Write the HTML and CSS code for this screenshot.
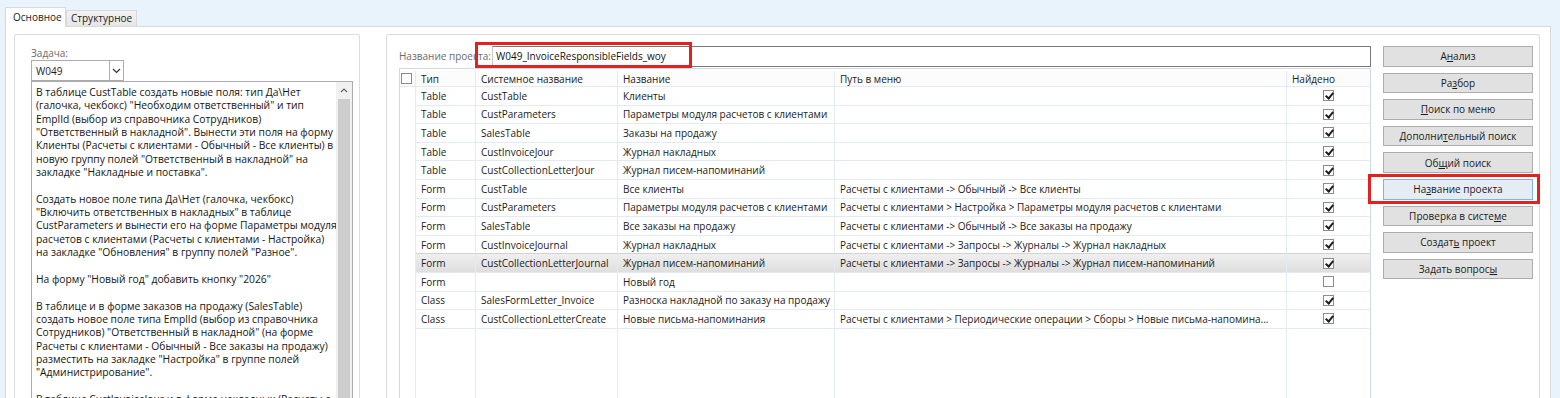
FILE: index.html
```html
<!DOCTYPE html>
<html lang="ru">
<head>
<meta charset="utf-8">
<title>Project</title>
<link rel="stylesheet" href="styles.css">
</head>
<body>
<div class="window">
  <div class="tabs">
    <div class="tab active">Основное</div>
    <div class="tab">Структурное</div>
  </div>
  <div class="page">
    <div class="group left-group">
      <div class="field-label">Задача:</div>
      <div class="combo">
        <span class="combo-text">W049</span>
        <span class="combo-btn"><svg width="9" height="6" viewBox="0 0 9 6"><path d="M1 1 L4.5 4.5 L8 1" fill="none" stroke="#333" stroke-width="1.2"/></svg></span>
      </div>
      <div class="memo">
        <div class="memo-text">
          <div>В таблице CustTable создать новые поля: тип Да\Нет</div>
          <div>(галочка, чекбокс) "Необходим ответственный" и тип</div>
          <div>EmplId (выбор из справочника Сотрудников)</div>
          <div>"Ответственный в накладной". Вынести эти поля на форму</div>
          <div>Клиенты (Расчеты с клиентами - Обычный - Все клиенты) в</div>
          <div>новую группу полей "Ответственный в накладной" на</div>
          <div>закладке "Накладные и поставка".</div>
          <div>&nbsp;</div>
          <div>Создать новое поле типа Да\Нет (галочка, чекбокс)</div>
          <div>"Включить ответственных в накладных" в таблице</div>
          <div>CustParameters и вынести его на форме Параметры модуля</div>
          <div>расчетов с клиентами (Расчеты с клиентами - Настройка)</div>
          <div>на закладке "Обновления" в группу полей "Разное".</div>
          <div>&nbsp;</div>
          <div>На форму "Новый год" добавить кнопку "2026"</div>
          <div>&nbsp;</div>
          <div>В таблице и в форме заказов на продажу (SalesTable)</div>
          <div>создать новое поле типа EmplId (выбор из справочника</div>
          <div>Сотрудников) "Ответственный в накладной" (на форме</div>
          <div>Расчеты с клиентами - Обычный - Все заказы на продажу)</div>
          <div>разместить на закладке "Настройка" в группе полей</div>
          <div>"Администрирование".</div>
          <div>&nbsp;</div>
          <div>В таблице CustInvoiceJour и в форме накладных (Расчеты с</div>
        </div>
        <div class="vscroll">
          <div class="vscroll-up"><svg width="8" height="5" viewBox="0 0 8 5"><path d="M1 4 L4 1 L7 4" fill="none" stroke="#606060" stroke-width="1.1"/></svg></div>
          <div class="vscroll-thumb"></div>
        </div>
      </div>
    </div>

    <div class="group right-group">
      <div class="main-col">
        <div class="name-row">
          <span class="field-label name-label">Название проекта:</span>
          <div class="name-input">W049_InvoiceResponsibleFields_woy</div>
          <div class="mark mark-input"></div>
        </div>
        <div class="grid">
          <div class="row head">
            <div class="cell c0"><span class="hbox"></span></div>
            <div class="cell">Тип</div>
            <div class="cell">Системное название</div>
            <div class="cell">Название</div>
            <div class="cell">Путь в меню</div>
            <div class="cell">Найдено</div>
          </div>

          <div class="row"><div class="cell c0"></div><div class="cell">Table</div><div class="cell">CustTable</div><div class="cell">Клиенты</div><div class="cell"></div><div class="cell chk"><span class="cb on"></span></div></div>
          <div class="row"><div class="cell c0"></div><div class="cell">Table</div><div class="cell">CustParameters</div><div class="cell">Параметры модуля расчетов с клиентами</div><div class="cell"></div><div class="cell chk"><span class="cb on"></span></div></div>
          <div class="row"><div class="cell c0"></div><div class="cell">Table</div><div class="cell">SalesTable</div><div class="cell">Заказы на продажу</div><div class="cell"></div><div class="cell chk"><span class="cb on"></span></div></div>
          <div class="row"><div class="cell c0"></div><div class="cell">Table</div><div class="cell">CustInvoiceJour</div><div class="cell">Журнал накладных</div><div class="cell"></div><div class="cell chk"><span class="cb on"></span></div></div>
          <div class="row"><div class="cell c0"></div><div class="cell">Table</div><div class="cell">CustCollectionLetterJour</div><div class="cell">Журнал писем-напоминаний</div><div class="cell"></div><div class="cell chk"><span class="cb on"></span></div></div>
          <div class="row"><div class="cell c0"></div><div class="cell">Form</div><div class="cell">CustTable</div><div class="cell">Все клиенты</div><div class="cell">Расчеты с клиентами -&gt; Обычный -&gt; Все клиенты</div><div class="cell chk"><span class="cb on"></span></div></div>
          <div class="row"><div class="cell c0"></div><div class="cell">Form</div><div class="cell">CustParameters</div><div class="cell">Параметры модуля расчетов с клиентами</div><div class="cell">Расчеты с клиентами &gt; Настройка &gt; Параметры модуля расчетов с клиентами</div><div class="cell chk"><span class="cb on"></span></div></div>
          <div class="row"><div class="cell c0"></div><div class="cell">Form</div><div class="cell">SalesTable</div><div class="cell">Все заказы на продажу</div><div class="cell">Расчеты с клиентами -&gt; Обычный -&gt; Все заказы на продажу</div><div class="cell chk"><span class="cb on"></span></div></div>
          <div class="row"><div class="cell c0"></div><div class="cell">Form</div><div class="cell">CustInvoiceJournal</div><div class="cell">Журнал накладных</div><div class="cell">Расчеты с клиентами -&gt; Запросы -&gt; Журналы -&gt; Журнал накладных</div><div class="cell chk"><span class="cb on"></span></div></div>
          <div class="row selected"><div class="cell c0"></div><div class="cell">Form</div><div class="cell">CustCollectionLetterJournal</div><div class="cell">Журнал писем-напоминаний</div><div class="cell">Расчеты с клиентами -&gt; Запросы -&gt; Журналы -&gt; Журнал писем-напоминаний</div><div class="cell chk"><span class="cb on"></span></div></div>
          <div class="row"><div class="cell c0"></div><div class="cell">Form</div><div class="cell"></div><div class="cell">Новый год</div><div class="cell"></div><div class="cell chk"><span class="cb"></span></div></div>
          <div class="row"><div class="cell c0"></div><div class="cell">Class</div><div class="cell">SalesFormLetter_Invoice</div><div class="cell">Разноска накладной по заказу на продажу</div><div class="cell"></div><div class="cell chk"><span class="cb on"></span></div></div>
          <div class="row"><div class="cell c0"></div><div class="cell">Class</div><div class="cell">CustCollectionLetterCreate</div><div class="cell">Новые письма-напоминания</div><div class="cell">Расчеты с клиентами &gt; Периодические операции &gt; Сборы &gt; Новые письма-напомина...</div><div class="cell chk"><span class="cb on"></span></div></div>

          <div class="row filler"><div class="cell c0"></div><div class="cell"></div><div class="cell"></div><div class="cell"></div><div class="cell"></div><div class="cell"></div></div>
        </div>
      </div>

      <div class="buttons">
        <div class="btn"><span>А<u>н</u>ализ</span></div>
        <div class="btn"><span>Ра<u>з</u>бор</span></div>
        <div class="btn"><span><u>П</u>оиск по меню</span></div>
        <div class="btn"><span>Дополни<u>т</u>ельный поиск</span></div>
        <div class="btn"><span>Об<u>щ</u>ий поиск</span></div>
        <div class="btn focused"><span>На<u>з</u>вание проекта</span><div class="mark mark-btn"></div></div>
        <div class="btn"><span>Проверка в систе<u>м</u>е</span></div>
        <div class="btn"><span>Создат<u>ь</u> проект</span></div>
        <div class="btn"><span>Задать вопрос<u>ы</u></span></div>
      </div>
    </div>
  </div>
</div>
</body>
</html>
```

FILE: styles.css
```css
* { box-sizing: border-box; }
html, body { margin: 0; height: 398px; overflow: hidden; }
body {
  background: #e9f3fb;
  font-family: "Open Sans", "Noto Sans", sans-serif;
  font-size: 10px;
  color: #1b1b1b;
}
.window {
  height: 398px;
  padding: 7px 9px 0 5px;
  display: flex;
  flex-direction: column;
}
.tabs {
  display: flex;
  align-items: flex-end;
  height: 20px;
  margin-bottom: -1px;
  position: relative;
  z-index: 1;
}
.tab {
  height: 16px;
  width: 71px;
  margin-bottom: 1px;
  border: 1px solid #d9d9d9;
  border-bottom: none;
  background: linear-gradient(#f2f2f2, #e6e6e6);
  padding-left: 4px;
  line-height: 15px;
  white-space: nowrap;
}
.tab.active {
  height: 20px;
  width: 61px;
  margin-bottom: 0;
  background: #fff;
  padding-left: 7px;
  line-height: 18px;
}
.page {
  flex: 1;
  min-height: 0;
  background: #fff;
  border: 1px solid #d9d9d9;
  border-bottom: none;
  padding: 7px 10px 0 8px;
  display: flex;
  gap: 26px;
  overflow: hidden;
}
.group {
  border: 1px solid #dcdcdc;
  border-bottom: none;
  border-radius: 3px 3px 0 0;
  background: #fff;
}
.left-group {
  width: 346px;
  flex: none;
  padding: 12px 6px 0 16px;
}
.field-label {
  color: #6b6b6b;
  line-height: 13px;
  white-space: nowrap;
}
.combo {
  width: 93px;
  height: 21px;
  border: 1px solid #acacac;
  display: flex;
  align-items: center;
}
.combo-text { flex: 1; padding-left: 4px; }
.combo-btn {
  width: 14px;
  height: 19px;
  border-left: 1px solid #acacac;
  display: flex;
  align-items: center;
  justify-content: center;
}
.memo {
  width: 322px;
  height: 340px;
  border: 1px solid #abadb3;
  display: flex;
}
.memo-text {
  flex: 1;
  padding: 4px 0 0 4px;
  font-size: 10.3px;
  line-height: 13.35px;
  white-space: nowrap;
  overflow: hidden;
  color: #151515;
}
.vscroll {
  width: 16px;
  flex: none;
  background: #f0f0f0;
  display: flex;
  flex-direction: column;
  align-items: center;
}
.vscroll-up {
  height: 17px;
  width: 100%;
  display: flex;
  align-items: center;
  justify-content: center;
}
.vscroll-thumb {
  width: 12px;
  flex: 1;
  background: #cdcdcd;
}
.right-group {
  flex: 1;
  min-width: 0;
  padding: 11px 6px 0 12px;
  display: flex;
  gap: 12px;
}
.main-col {
  width: 972px;
  flex: none;
  display: flex;
  flex-direction: column;
}
.name-row {
  display: flex;
  align-items: center;
  height: 21px;
  position: relative;
}
.name-label { width: 93px; flex: none; }
.name-input {
  flex: 1;
  height: 21px;
  border: 1px solid #7a7a7a;
  border-left-color: #c8c8c8;
  padding-left: 3px;
  line-height: 19px;
  color: #111;
}
.mark {
  position: absolute;
  border: 3px solid #e3211f;
  pointer-events: none;
}
.mark-input { left: 76px; top: -4px; width: 217px; height: 26px; }
.grid {
  margin-top: 1px;
  flex: 1;
  border: 1px solid #cfdae7;
  border-bottom: none;
  padding-top: 2px;
  display: flex;
  flex-direction: column;
  overflow: hidden;
}
.row {
  display: grid;
  grid-template-columns: 16px 60px 142px 217px 452px 1fr;
  height: 18.6px;
  flex: none;
}
.cell {
  border-right: 1px solid #e1eaf5;
  border-bottom: 1px solid #e1eaf5;
  padding-left: 5px;
  white-space: nowrap;
  overflow: hidden;
  display: flex;
  align-items: center;
}
.cell:last-child { border-right: none; }
.c0 { border-bottom: none; padding-left: 0; }
.head { height: 16px; }
.head .cell { background: #fcfcfc; border-bottom-color: #e1eaf5; }
.head .c0 { justify-content: center; padding-right: 2px; border-bottom: 1px solid #e1eaf5; }
.hbox {
  width: 11px;
  height: 11px;
  border: 1px solid #8a8a8a;
  background: #fff;
}
.selected .cell:not(.c0) {
  background: linear-gradient(#efefef, #dedede);
  border-top: 1px solid #d3d3d3;
}
.selected { margin-top: -1px; height: 19.6px; }
.chk { justify-content: center; padding-left: 0; }
.cb {
  width: 11px;
  height: 11px;
  border: 1px solid #8c8c8c;
  background: #fff;
  position: relative;
}
.cb.on::after {
  content: "";
  position: absolute;
  left: 3px;
  top: 0px;
  width: 3px;
  height: 6px;
  border: solid #1e1e1e;
  border-width: 0 2px 2px 0;
  transform: rotate(40deg);
}
.filler { flex: 1; height: auto; }
.filler .cell { border-bottom: none; }
.buttons {
  width: 150px;
  flex: none;
  display: flex;
  flex-direction: column;
  gap: 6px;
}
.btn {
  height: 20.6px;
  border: 1px solid #adadad;
  background: #e1e1e1;
  display: flex;
  align-items: center;
  justify-content: center;
  white-space: nowrap;
  color: #1b1b1b;
  position: relative;
}
.btn u { text-underline-offset: 1px; }
.btn.focused {
  border-color: #7eb4ea;
  background: #e5ecf3;
}
.mark-btn { left: -16px; top: -6px; width: 172px; height: 30px; }
```
